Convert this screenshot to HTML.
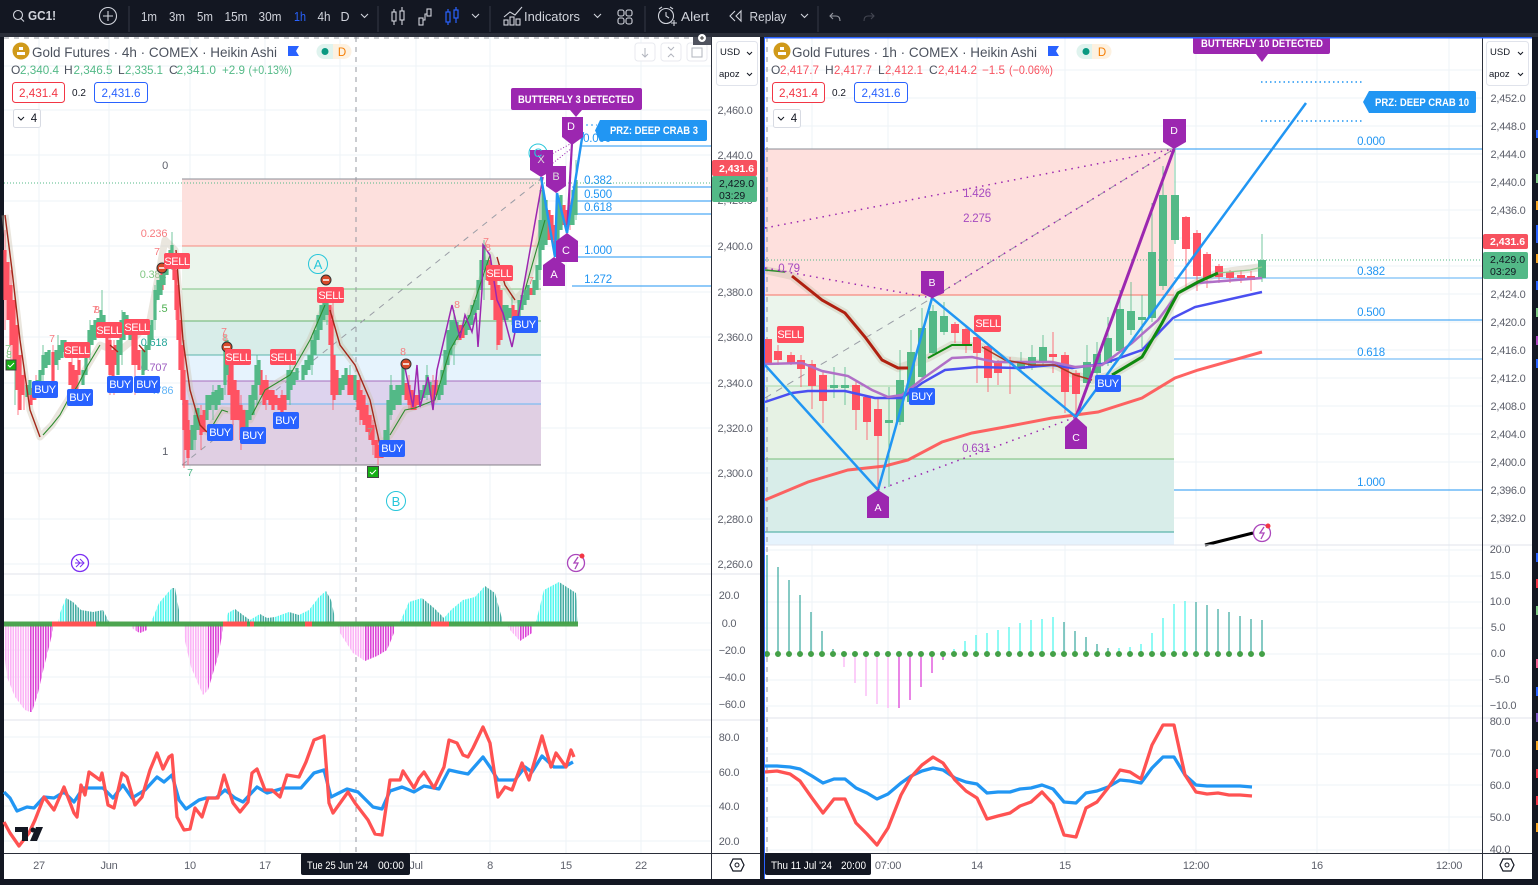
<!DOCTYPE html>
<html><head><meta charset="utf-8"><title>GC1! Chart</title>
<style>
html,body{margin:0;padding:0;background:#131722;width:1538px;height:885px;overflow:hidden}
svg{display:block;font-family:"Liberation Sans",sans-serif}
.tb{fill:#d1d4dc;font-size:12.5px;text-anchor:middle}
.ax{fill:#5d606b;font-size:11px;letter-spacing:-.25px;text-anchor:middle}
.tm{fill:#5d606b;font-size:11px;letter-spacing:-.25px;text-anchor:middle}
.fb{fill:#2196f3;font-size:11.5px;letter-spacing:-.2px;text-anchor:middle}
.lb{fill:#fff;font-size:11px;letter-spacing:-.4px;text-anchor:middle}
.mk{fill:#9c27b0}
.n{fill:#f77c80;font-size:10.5px;text-anchor:middle}
.pl{fill:#a64bc0;font-size:11.5px;letter-spacing:-.2px;text-anchor:middle}
.i{fill:none;stroke:#d1d4dc;stroke-width:1.1}
.g{fill:#4c525e;font-size:12px}
.u{fill:#53b987;font-size:12px}
.d{fill:#f7525f;font-size:12px}
</style></head><body>
<svg width="1538" height="885" viewBox="0 0 1538 885" xmlns="http://www.w3.org/2000/svg">
<defs>
<pattern id="cy" width="2.5" height="4" patternUnits="userSpaceOnUse"><rect width="1.6" height="4" fill="#55f7ee"/></pattern>
<pattern id="te" width="2.5" height="4" patternUnits="userSpaceOnUse"><rect width="1.6" height="4" fill="#45ada4"/></pattern>
<pattern id="pk" width="2.5" height="4" patternUnits="userSpaceOnUse"><rect width="1.6" height="4" fill="#fbb4f6"/></pattern>
<pattern id="mg" width="2.5" height="4" patternUnits="userSpaceOnUse"><rect width="1.6" height="4" fill="#dd45d8"/></pattern>
</defs>
<rect width="1538" height="885" fill="#131722"/>
<rect y="33" width="1538" height="4" fill="#2a2e39"/>

<!-- TOOLBAR -->
<circle cx="18" cy="15" r="4.5" class="i"/><path d="M21 18.5l3 3" class="i"/>
<text x="28" y="20" fill="#d1d4dc" font-size="13" font-weight="bold" textLength="28" lengthAdjust="spacingAndGlyphs">GC1!</text>
<circle cx="108" cy="16" r="8.5" class="i"/><path d="M108 11v10M103 16h10" class="i"/>
<path d="M129 6v26M378 6v26M490 6v26M645 6v26M818 6v26" stroke="#363a45"/>
<text x="149" y="21" class="tb" textLength="16" lengthAdjust="spacingAndGlyphs">1m</text>
<text x="177" y="21" class="tb" textLength="16" lengthAdjust="spacingAndGlyphs">3m</text>
<text x="205" y="21" class="tb" textLength="16" lengthAdjust="spacingAndGlyphs">5m</text>
<text x="236" y="21" class="tb" textLength="23" lengthAdjust="spacingAndGlyphs">15m</text>
<text x="270" y="21" class="tb" textLength="23" lengthAdjust="spacingAndGlyphs">30m</text>
<text x="300" y="21" class="tb" style="fill:#2962ff" textLength="12" lengthAdjust="spacingAndGlyphs">1h</text>
<text x="324" y="21" class="tb" textLength="13" lengthAdjust="spacingAndGlyphs">4h</text>
<text x="345" y="21" class="tb">D</text>
<path d="M361 14l3.500 3.500 3.500-3.500M472 14l3.500 3.500 3.500-3.500M594 14l3.500 3.500 3.500-3.500M801 14l3.500 3.500 3.500-3.500" class="i"/>
<g class="i"><path d="M394 9v16M402 7v18"/><rect x="392" y="12" width="4" height="9" fill="#131722"/><rect x="400" y="11" width="4" height="9" fill="#131722"/>
<rect x="419" y="18" width="4" height="7"/><rect x="427" y="9" width="4" height="7"/><path d="M423 20h2v-6h2"/></g>
<g fill="none" stroke="#2962ff" stroke-width="1.2"><path d="M448 9v16M456 7v16"/><rect x="446" y="12" width="4" height="10" fill="#131722"/><rect x="454" y="10" width="4" height="8" fill="#131722"/></g>
<g class="i"><path d="M504 17l6-5 5 3 7-8"/><rect x="504" y="20" width="4" height="5"/><rect x="510" y="17" width="4" height="8"/><rect x="516" y="19" width="4" height="6"/></g>
<text x="552" y="21" class="tb" textLength="56" lengthAdjust="spacingAndGlyphs">Indicators</text>
<g class="i"><rect x="618" y="10" width="6" height="6" rx="2"/><rect x="626" y="10" width="6" height="6" rx="2"/><rect x="618" y="18" width="6" height="6" rx="2"/><rect x="626" y="18" width="6" height="6" rx="2"/></g>
<g class="i"><circle cx="666" cy="16" r="7.5"/><path d="M666 12v4l3 2M659 9l3-2M673 9l-3-2M671 23h6M674 20v6"/></g>
<text x="695" y="21" class="tb" textLength="28" lengthAdjust="spacingAndGlyphs">Alert</text>
<path d="M735 11l-5 5 5 5M741 11l-5 5 5 5z" class="i"/>
<text x="768" y="21" class="tb" textLength="37" lengthAdjust="spacingAndGlyphs">Replay</text>
<path d="M833 13l-3 3 3 3M830 16h6c3 0 4 2 4 5" stroke="#9598a1" fill="none" stroke-width="1.1"/>
<path d="M871 13l3 3-3 3M874 16h-6c-3 0-4 2-4 5" stroke="#434651" fill="none" stroke-width="1.1"/>

<!-- LEFT PANEL -->
<rect x="4" y="37" width="756" height="842" fill="#fff"/>
<path d="M39 37V853M109 37V853M190 37V853M265 37V853M340 37V853M416 37V853M490 37V853M566 37V853M641 37V853" stroke="#eef3f7"/>
<path d="M4 66H711M4 110H711M4 155H711M4 201H711M4 246H711M4 292H711M4 337H711M4 383H711M4 428H711M4 473H711M4 519H711M4 564H711M4 595H711M4 623H711M4 650H711M4 677H711M4 704H711M4 737H711M4 772H711M4 806H711M4 841H711" stroke="#eef3f7"/>
<rect x="182" y="179" width="359" height="67" fill="#fde0dd"/>
<rect x="182" y="246" width="359" height="43" fill="#ebf5ec"/>
<rect x="182" y="289" width="359" height="32" fill="#e5f1e5"/>
<rect x="182" y="321" width="359" height="34" fill="#d8ede9"/>
<rect x="182" y="355" width="359" height="26" fill="#e6f3fd"/>
<rect x="182" y="381" width="359" height="23" fill="#ddd3ee"/>
<rect x="182" y="404" width="359" height="61" fill="#e0cfe3"/>
<path d="M182 179H541" stroke="#8a8d96"/><path d="M182 246H541" stroke="#f68a80"/><path d="M182 289H541" stroke="#7fc384"/><path d="M182 321H541" stroke="#69b36d"/><path d="M182 355H541" stroke="#5bb4aa"/><path d="M182 381H541" stroke="#a76dbd"/><path d="M182 404H541" stroke="#66b7f3"/><path d="M182 465H541" stroke="#85808a"/>
<path d="M182 465L541 179" stroke="#9a9da6" stroke-dasharray="6 6" fill="none"/>
<text x="165" y="169" class="ax">0</text>
<text x="154" y="237" font-size="11" letter-spacing="-.2" fill="#f77c80" text-anchor="middle">0.236</text>
<text x="153" y="278" font-size="11" letter-spacing="-.2" fill="#81c784" text-anchor="middle">0.382</text>
<text x="163" y="312" font-size="11" fill="#4caf50" text-anchor="middle">.5</text>
<text x="154" y="346" font-size="11" letter-spacing="-.2" fill="#26a69a" text-anchor="middle">0.618</text>
<text x="154" y="371" font-size="11" letter-spacing="-.2" fill="#9c5cc0" text-anchor="middle">0.707</text>
<text x="163" y="394" font-size="11" letter-spacing="-.2" fill="#64b5f6" text-anchor="middle">.786</text>
<text x="165" y="455" class="ax">1</text>
<path d="M582 146H711M572 187H711M572 201H711M572 214H711M572 257H711M572 286H711" stroke="#2196f3"/>
<text x="597" y="142" class="fb">0.000</text><text x="598" y="184" class="fb">0.382</text><text x="598" y="198" class="fb">0.500</text><text x="598" y="211" class="fb">0.618</text><text x="598" y="254" class="fb">1.000</text><text x="598" y="283" class="fb">1.272</text>
<path d="M4 183H711" stroke="#53b987" stroke-width="1" stroke-dasharray="1 2"/>
<path d="M356 37V853M4 38H711" stroke="#9598a1" stroke-dasharray="5 5" fill="none"/>
<!-- MA glow -->
<path d="M5 215L12 270L20 340L30 410L40 437L52 425L68 400L88 365L100 345L118 352L133 340L150 320L165 240L175 250L183 340L190 390L200 425L207 432L222 410L243 412L250 420L265 390L290 375L310 340L325 305L330 310L340 345L355 365L370 400L380 445L390 435L405 410L435 400L450 350L470 315L490 255L505 285L515 300L525 290L545 220" fill="none" stroke="#c9bda9" stroke-opacity=".38" stroke-width="7" stroke-linejoin="round"/>
<!-- wicks -->
<path d="M5 230V330M11 270V370M18 320V415M24 370V410M36 375V400M53 345V392M72 355V405M78 350V400M110 325V395M114 340V395M135 325V395M176 255V320M184 340V468M188 400V465M201 405V450M233 360V440M241 395V450M266 375V410M282 390V425M333 300V410M360 375V425M373 420V455M378 435V465M409 375V410M433 375V410M497 270V350M500 285V345M570 190V230" stroke="#ff5262" stroke-opacity=".75" fill="none"/>
<path d="M15 350V405M43 345V385M58 335V370M90 320V360M102 290V335M122 310V365M155 285V330M172 232V270M195 405V450M213 385V420M225 335V395M257 355V405M290 365V405M312 335V375M327 290V325M350 365V390M391 375V420M427 365V400M454 310V365M484 240V300M512 295V325M540 190V280M576 160V220" stroke="#53b987" stroke-opacity=".8" fill="none"/>
<!-- candles -->
<path stroke="#ff5262" stroke-width="3.2" fill="none" d="M5 250V300M8 262V320M11 285V345M14 300V370M17 325V390M20 355V410M23 375V395M31 388V405M34 388V400M53 352V382M70 362V385M73 365V395M76 370V392M79 360V375M107 338V365M110 340V375M113 350V380M115 345V365M133 335V365M136 335V365M139 350V370M162 268V290M174 260V280M176 270V310M178 285V340M180 320V370M182 345V400M184 370V430M186 400V450M188 420V458M190 430V450M201 415V435M204 410V432M229 355V395M232 365V420M235 380V420M238 390V420M241 405V440M244 410V430M261 370V395M264 380V405M267 380V400M270 390V405M273 390V410M276 395V405M279 398V410M282 395V420M285 395V410M330 305V345M332 320V395M334 355V400M337 370V395M349 375V395M352 375V395M358 380V410M361 390V420M364 395V425M367 405V432M370 415V440M373 425V445M376 440V458M379 445V458M382 448V458M406 383V400M409 385V405M412 390V410M415 395V410M418 395V405M433 385V400M436 380V395M460 325V340M463 325V338M490 260V285M492 265V300M495 275V320M498 285V345M501 290V340M513 305V320M516 310V318M531 288V295M549 210V240M552 215V240M555 225V255M564 205V225M567 210V225"/>
<path stroke="#53b987" stroke-width="3.2" fill="none" d="M27 385V397M30 380V395M37 380V395M40 370V385M43 355V375M46 352V368M49 350V365M56 350V365M59 345V360M62 340V358M65 340V352M83 370V385M86 350V375M89 330V355M92 325V345M95 320V340M98 318V335M101 310V330M104 315V330M118 340V375M121 320V355M124 312V340M127 315V335M130 325V340M143 350V375M146 345V370M149 325V350M152 320V340M155 290V320M158 280V300M161 275V295M164 265V285M167 255V275M170 250V265M172 245V260M192 425V450M195 415V440M198 408V430M207 395V420M210 395V410M213 392V405M216 390V410M219 385V405M222 388V400M225 345V385M227 340V375M247 410V428M250 395V420M253 385V415M256 365V400M259 360V385M288 370V400M291 370V390M294 372V385M297 368V380M303 365V380M306 360V375M309 355V370M312 340V365M315 330V355M318 315V340M321 305V330M324 300V320M327 298V315M340 378V395M343 375V390M346 368V385M355 375V400M385 430V455M388 400V440M391 385V415M394 390V410M397 385V405M400 385V405M403 365V395M421 390V400M424 385V398M427 375V395M430 382V395M439 385V400M442 370V395M445 350V385M448 330V365M451 320V355M454 320V345M457 322V340M466 320V335M469 315V330M472 305V325M475 300V315M478 280V310M481 260V290M484 245V270M487 260V280M504 305V320M507 305V320M510 308V318M519 300V320M522 295V310M525 290V305M528 285V300M534 280V295M537 265V290M540 220V270M543 190V250M546 200V245M558 200V240M561 195V230M570 205V225M573 190V225M576 180V215"/>
<!-- MA lines -->
<path d="M5 215L12 270L20 340L30 410L40 437" fill="none" stroke="#a2281a" stroke-width="1.4"/>
<path d="M43 435L52 425L60 415L68 400L78 385L88 365L100 345" fill="none" stroke="#2e8b2e" stroke-width="1.1"/>
<path d="M110 345L118 352M139 345L145 352M176 250L183 340L190 390L200 425L207 432M330 310L340 345L355 365L370 400L380 445M497 257L505 285L515 300" fill="none" stroke="#a2281a" stroke-width="1.4"/>
<path d="M210 430L222 410L228 412M252 415L265 390L290 375L310 340L325 305M390 435L405 410L415 408L435 400L450 350L470 315L490 255M525 290L545 220" fill="none" stroke="#2e8b2e" stroke-width="1.1"/>
<path d="M404 363L413 407L417 365L420 407L428 377L433 410L437 370L452 305L460 338L465 315L472 332L476 313L478 347L482 290L483 245L490 255L497 300L503 313L512 347L520 307L543 177" fill="none" stroke="#9c27b0" stroke-width="1.5"/>
<path d="M567 233L572 143" fill="none" stroke="#9c27b0" stroke-width="2.2"/>
<path d="M550 155L572 143M548 167L572 148" stroke="#9c27b0" stroke-dasharray="1 2" fill="none"/>
<path d="M541 177L555 257L557 193L567 233L583 132" fill="none" stroke="#2196f3" stroke-width="2.4"/>
<g class="n"><text x="157" y="255">7</text><text x="95" y="313">7</text><text x="97" y="313">8</text><text x="52" y="342">7</text><text x="224" y="335">7</text><text x="225" y="341">8</text><text x="403" y="355">8</text><text x="486" y="245">7</text><text x="488" y="251">8</text><text x="457" y="308">8</text><text x="531" y="284">7</text></g>
<text x="8" y="352" font-size="10.500" fill="#81c784" text-anchor="middle">7</text><text x="9" y="358" font-size="10.5" fill="#81c784" text-anchor="middle">8</text>
<text x="190" y="476" font-size="10.5" fill="#53b987" text-anchor="middle">7</text>
<text x="370" y="435" font-size="10.5" fill="#8fa896" text-anchor="middle">7</text>
<g stroke="#333" fill="#d84a2a"><circle cx="162" cy="268" r="5"/><circle cx="227" cy="347" r="5"/><circle cx="326" cy="280" r="5"/><circle cx="406" cy="364" r="5"/></g>
<path d="M159 268h6M224 347h6M323 280h6M403 364h6" stroke="#fff" stroke-width="1.5"/>
<g fill="#ff4d5e">
<rect x="164" y="253" width="26" height="16" rx="2"/><rect x="64" y="342" width="26" height="16" rx="2"/><rect x="96" y="322" width="26" height="16" rx="2"/><rect x="124" y="319" width="26" height="16" rx="2"/><rect x="225" y="349" width="26" height="16" rx="2"/><rect x="270" y="349" width="26" height="16" rx="2"/><rect x="317" y="287" width="27" height="16" rx="2"/><rect x="486" y="265" width="27" height="16" rx="2"/>
</g>
<g class="lb"><text x="177" y="265">SELL</text><text x="77" y="354">SELL</text><text x="109" y="334">SELL</text><text x="137" y="331">SELL</text><text x="238" y="361">SELL</text><text x="283" y="361">SELL</text><text x="331" y="299">SELL</text><text x="499" y="277">SELL</text></g>
<g fill="#2962ff">
<rect x="32" y="381" width="26" height="17" rx="2"/><rect x="67" y="389" width="26" height="17" rx="2"/><rect x="107" y="376" width="26" height="17" rx="2"/><rect x="134" y="376" width="26" height="17" rx="2"/><rect x="207" y="424" width="26" height="17" rx="2"/><rect x="240" y="427" width="26" height="17" rx="2"/><rect x="273" y="412" width="26" height="17" rx="2"/><rect x="379" y="440" width="26" height="17" rx="2"/><rect x="512" y="316" width="26" height="17" rx="2"/>
</g>
<g class="lb"><text x="45" y="393">BUY</text><text x="80" y="401">BUY</text><text x="120" y="388">BUY</text><text x="147" y="388">BUY</text><text x="220" y="436">BUY</text><text x="253" y="439">BUY</text><text x="286" y="424">BUY</text><text x="392" y="452">BUY</text><text x="525" y="328">BUY</text></g>
<rect x="6" y="360" width="10" height="10" fill="#16b016" stroke="#444"/><path d="M8 365l2 2 4-4" stroke="#fff" fill="none"/>
<rect x="367.500" y="466.500" width="11" height="11" fill="#16b016" stroke="#444"/><path d="M370 472l2 2 4-4" stroke="#fff" fill="none"/>
<g fill="none" stroke="#26c6da"><circle cx="318" cy="264" r="9.500"/><circle cx="396" cy="501" r="9.500"/><circle cx="538" cy="153" r="9"/></g>
<text x="318" y="269" font-size="13" fill="#26c6da" text-anchor="middle">A</text><text x="396" y="506" font-size="13" fill="#26c6da" text-anchor="middle">B</text>
<path class="mk" d="M562 117H583V137L572 145L562 137Z"/>
<path class="mk" d="M530 150H553V170L541 177L530 170Z"/>
<path class="mk" d="M546 166H566V186L556 193L546 186Z"/>
<path class="mk" d="M556 241L567 233L578 241V262H556Z"/>
<path class="mk" d="M543 265L554 257L565 265V286H543Z"/>
<g fill="#fff" font-size="11" text-anchor="middle"><text x="571" y="130">D</text><text x="541" y="163" fill="#ddd">X</text><text x="556" y="180" fill="#ddd">B</text><text x="566" y="254">C</text><text x="554" y="278">A</text></g>
<text x="538" y="157" font-size="12" fill="#26c6da" text-anchor="middle">C</text>
<path class="mk" d="M513 88H640Q642 88 642 90V108Q642 110 640 110H582L576 117L570 110H513Q511 110 511 108V90Q511 88 513 88Z"/>
<text x="576" y="103" font-size="11" font-weight="bold" fill="#fff" text-anchor="middle" textLength="116" lengthAdjust="spacingAndGlyphs">BUTTERFLY 3 DETECTED</text>
<path d="M586 125H597" stroke="#2196f3" stroke-dasharray="2 3"/>
<path d="M600 120H705Q707 120 707 122V139Q707 141 705 141H600L595 130.500Z" fill="#2196f3"/>
<text x="654" y="134" font-size="11" font-weight="bold" fill="#fff" text-anchor="middle" textLength="88" lengthAdjust="spacingAndGlyphs">PRZ: DEEP CRAB 3</text>
<!-- legend left -->
<circle cx="21" cy="51" r="8.500" fill="#d09a1a"/><path d="M17 52h8v3h-8zM19 47h4v3h-4z" fill="#fff"/>
<text x="32" y="57" font-size="14" fill="#4c525e" textLength="245" lengthAdjust="spacingAndGlyphs">Gold Futures · 4h · COMEX · Heikin Ashi</text>
<path d="M288 46h11l-3 5 3 5h-11z" fill="#2962ff"/>
<path d="M333 44h-9a7.500 7.500 0 0 0 0 15h9z" fill="#dff3ee"/><path d="M333 44h11a7.500 7.500 0 0 1 0 15h-11z" fill="#fdf1e0"/>
<circle cx="325" cy="51.500" r="3.500" fill="#089981"/><text x="342" y="56" font-size="11.500" fill="#f57c00" text-anchor="middle">D</text>
<text x="11" y="74" class="g">O</text><text x="20" y="74" class="u" textLength="39" lengthAdjust="spacingAndGlyphs">2,340.4</text>
<text x="64" y="74" class="g">H</text><text x="73.500" y="74" class="u" textLength="39" lengthAdjust="spacingAndGlyphs">2,346.5</text>
<text x="118" y="74" class="g">L</text><text x="125" y="74" class="u" textLength="38" lengthAdjust="spacingAndGlyphs">2,335.1</text>
<text x="169" y="74" class="g">C</text><text x="176.500" y="74" class="u" textLength="39.500" lengthAdjust="spacingAndGlyphs">2,341.0</text>
<text x="222" y="74" class="u" textLength="23" lengthAdjust="spacingAndGlyphs">+2.9</text><text x="248.500" y="74" class="u" textLength="43.500" lengthAdjust="spacingAndGlyphs">(+0.13%)</text>
<rect x="12.500" y="82.500" width="52" height="20" rx="3" fill="#fff" stroke="#f23645"/><text x="38.500" y="97" font-size="12" fill="#f23645" text-anchor="middle" textLength="39" lengthAdjust="spacingAndGlyphs">2,431.4</text>
<text x="79" y="96" font-size="10" fill="#131722" text-anchor="middle">0.2</text>
<rect x="94.500" y="82.500" width="53" height="20" rx="3" fill="#fff" stroke="#2962ff"/><text x="121" y="97" font-size="12" fill="#2962ff" text-anchor="middle" textLength="39" lengthAdjust="spacingAndGlyphs">2,431.6</text>
<rect x="13.500" y="109.500" width="27" height="18" rx="2" fill="#fff" stroke="#d8dbe3"/><path d="M18 117l3 3 3-3" stroke="#131722" fill="none"/><text x="34" y="122" font-size="11.500" fill="#131722" text-anchor="middle">4</text>
<g fill="#fff" stroke="#e8eaef"><rect x="635" y="43" width="20" height="18" rx="3"/><rect x="661" y="43" width="20" height="18" rx="3"/><rect x="687" y="43" width="20" height="18" rx="3"/></g>
<path d="M645 48v9M642 54l3 3 3-3M668 47l3 3 3-3M668 57l3-3 3 3M692 48h10v9h-10z" stroke="#b2b5be" fill="none"/>
<rect x="693" y="37" width="18" height="8" fill="#50535e"/><circle cx="702" cy="38" r="4" fill="#fff"/><path d="M702 36v4M700 38h4" stroke="#333"/>
<circle cx="80" cy="563" r="8.500" fill="#fff" stroke="#7b2ff2" stroke-width="1.300"/><path d="M76 559l4 4-4 4M80 559l4 4-4 4M75 563h9" stroke="#7b2ff2" fill="none"/>
<circle cx="576" cy="563" r="8.500" fill="#fff" stroke="#ab47bc" stroke-width="1.300"/><path d="M578 557l-4 6h4l-3 6" stroke="#ab47bc" fill="none" stroke-width="1.300"/><circle cx="582" cy="556" r="2.500" fill="#f23645"/>
<!-- hist left -->
<polygon fill="url(#pk)" points="4,624 5,660 7,677 15,697 25,710 30,712 30,624"/>
<polygon fill="url(#mg)" points="30,624 30,712 32,712 38,693 44,667 49,647 53,630 53,624"/>
<polygon fill="url(#cy)" points="58,624 60,613 66,598 66,624"/>
<polygon fill="url(#te)" points="66,624 66,598 73,602 81,610 93,612 103,610 108,620 110,624"/>
<polygon fill="url(#pk)" points="132,624 132,628 136,631 136,624"/>
<polygon fill="url(#mg)" points="136,624 136,631 140,633 147,630 147,624"/>
<polygon fill="url(#cy)" points="150,624 152,620 159,603 172,588 172,624"/>
<polygon fill="url(#te)" points="172,624 172,588 175,588 179,610 179,624"/>
<polygon fill="url(#pk)" points="184,624 184,637 191,667 203,695 208,690 208,624"/>
<polygon fill="url(#mg)" points="208,624 208,690 211,680 218,657 223,630 223,624"/>
<polygon fill="url(#cy)" points="226,624 228,613 235,609 235,624"/>
<polygon fill="url(#te)" points="235,624 235,609 243,615 250,620 250,624"/>
<polygon fill="url(#cy)" points="250,624 250,620 260,614 260,624"/>
<polygon fill="url(#te)" points="260,624 260,614 267,618 275,617 275,624"/>
<polygon fill="url(#cy)" points="275,624 275,617 289,612 289,624"/>
<polygon fill="url(#te)" points="289,624 289,612 299,615 299,624"/>
<polygon fill="url(#cy)" points="299,624 299,615 309,610 319,597 326,591 326,624"/>
<polygon fill="url(#te)" points="326,624 326,591 331,600 335,618 335,624"/>
<polygon fill="url(#pk)" points="338,624 340,633 353,653 365,661 365,624"/>
<polygon fill="url(#mg)" points="365,624 365,661 377,656 387,650 394,633 394,624"/>
<polygon fill="url(#cy)" points="399,624 401,620 409,602 422,598 422,624"/>
<polygon fill="url(#te)" points="422,624 422,598 434,608 444,618 444,624"/>
<polygon fill="url(#cy)" points="444,624 444,618 451,610 463,600 475,597 485,586 485,624"/>
<polygon fill="url(#te)" points="485,624 485,586 495,593 501,615 503,624"/>
<polygon fill="url(#pk)" points="507,624 510,630 520,641 520,624"/>
<polygon fill="url(#mg)" points="520,624 520,641 532,633 532,624"/>
<polygon fill="url(#cy)" points="535,624 537,618 544,590 559,582 559,624"/>
<polygon fill="url(#te)" points="559,624 559,582 576,593 578,624"/>
<path d="M4 624H578" stroke="#43a047" stroke-width="5" stroke-opacity=".95"/>
<path d="M52 624H96M223 624H247M250 624H254M305 624H312M431 624H449" stroke="#ff5252" stroke-width="5"/>
<polyline fill="none" stroke="#2196f3" stroke-width="3.3" stroke-linejoin="round" points="4,792 10,798 17,811 27,807 34,808 44,797 54,798 64,792 74,802 83,788 103,788 113,798 123,785 132,798 145,790 157,777 164,782 172,775 179,800 186,809 199,800 206,798 216,798 225,790 235,798 243,802 257,787 267,793 284,788 301,788 314,773 324,770 331,797 347,789 358,792 373,807 382,809 390,791 402,787 414,792 424,786 439,789 449,770 458,772 468,774 483,757 490,767 498,780 515,780 525,767 532,772 542,756 554,767 564,767 573,762"/>
<polyline fill="none" stroke="#ff5252" stroke-width="3.3" stroke-linejoin="round" points="4,822 10,833 19,846 29,833 35,820 44,797 54,810 64,787 74,813 77,817 81,785 85,795 89,772 100,780 102,773 108,805 114,808 122,773 127,777 135,805 142,797 150,770 157,753 163,769 169,757 172,755 177,817 184,830 190,829 195,808 202,817 208,798 218,798 224,775 233,803 240,812 248,802 252,773 257,769 265,790 272,790 280,797 287,775 299,777 306,762 314,740 324,736 329,803 333,813 348,792 355,803 368,820 375,834 382,835 390,780 400,780 403,771 414,788 419,778 424,772 434,788 444,767 449,740 457,743 463,755 468,757 473,748 483,727 490,743 498,797 505,787 512,790 522,763 529,780 542,736 551,767 556,753 566,767 571,750 574,757"/>
<path d="M15 827h13v14h-6v-9h-7zM36 827h7l-6 14h-7z" fill="#131722"/><circle cx="33" cy="830" r="2.500" fill="#131722"/>
<path d="M4 574H760M4 720H760" stroke="#e0e3eb"/>
<rect x="711" y="37" width="1" height="816" fill="#2a2e39"/>
<rect x="4" y="853" width="756" height="1" fill="#2a2e39"/><rect x="711" y="853" width="1" height="26" fill="#2a2e39"/>
<rect x="716.500" y="41.500" width="41" height="44" rx="3" fill="#fff" stroke="#e0e3eb"/>
<text x="720" y="55" font-size="9.500" fill="#131722">USD</text><text x="719" y="77" font-size="9.500" fill="#131722">apoz</text>
<path d="M747 52l2.500 2.500 2.500-2.500M747 73l2.500 2.500 2.500-2.500" stroke="#131722" fill="none"/>
<g class="ax"><text x="735" y="114">2,460.0</text><text x="735" y="159">2,440.0</text><text x="735" y="204">2,420.0</text><text x="735" y="250">2,400.0</text><text x="735" y="296">2,380.0</text><text x="735" y="341">2,360.0</text><text x="735" y="387">2,340.0</text><text x="735" y="432">2,320.0</text><text x="735" y="477">2,300.0</text><text x="735" y="523">2,280.0</text><text x="735" y="568">2,260.0</text><text x="729" y="599">20.0</text><text x="729" y="627">0.0</text><text x="732" y="654">−20.0</text><text x="732" y="681">−40.0</text><text x="732" y="708">−60.0</text><text x="729" y="741">80.0</text><text x="729" y="776">60.0</text><text x="729" y="810">40.0</text><text x="729" y="845">20.0</text></g>
<rect x="712" y="160" width="45" height="16" rx="2" fill="#f7525f"/><text x="719" y="172" font-size="10.500" font-weight="bold" fill="#fff">2,431.6</text>
<rect x="712" y="176" width="45" height="26" rx="2" fill="#53b987"/><text x="719" y="187" font-size="10.500" fill="#131722">2,429.0</text><text x="719" y="199" font-size="10.500" fill="#131722">03:29</text>
<g class="tm"><text x="39" y="869">27</text><text x="109" y="869">Jun</text><text x="190" y="869">10</text><text x="265" y="869">17</text><text x="416" y="869">Jul</text><text x="490" y="869">8</text><text x="566" y="869">15</text><text x="641" y="869">22</text></g>
<rect x="301" y="853" width="109" height="22" rx="2" fill="#131722"/><text x="307" y="869" font-size="11" fill="#fff" textLength="61" lengthAdjust="spacingAndGlyphs">Tue 25 Jun '24</text><text x="378" y="869" font-size="11" fill="#fff" textLength="26" lengthAdjust="spacingAndGlyphs">00:00</text>
<path d="M733 859h8l3 6-3 6h-8l-3-6z" fill="none" stroke="#131722" stroke-width="1.200"/><circle cx="737" cy="865" r="2" fill="none" stroke="#131722"/>

<!-- RIGHT PANEL -->
<rect x="765" y="37" width="767" height="842" fill="#fff"/>
<path d="M812 37V853M888 37V853M977 37V853M1065 37V853M1196 37V853M1317 37V853M1449 37V853" stroke="#eef3f7"/>
<path d="M765 70H1482M765 98H1482M765 126H1482M765 154H1482M765 182H1482M765 210H1482M765 238H1482M765 266H1482M765 294H1482M765 322H1482M765 350H1482M765 378H1482M765 406H1482M765 434H1482M765 462H1482M765 490H1482M765 518H1482M765 550H1482M765 576H1482M765 602H1482M765 628H1482M765 654H1482M765 680H1482M765 706H1482M765 754H1482M765 785H1482M765 817H1482M765 850H1482" stroke="#eef3f7"/>
<rect x="765" y="149" width="409" height="146" fill="#fee0dd"/>
<rect x="765" y="295" width="409" height="91" fill="#ebf5ec"/>
<rect x="765" y="386" width="409" height="73" fill="#e6f2e4"/>
<rect x="765" y="459" width="409" height="73" fill="#d8ede9"/>
<rect x="765" y="532" width="409" height="13" fill="#e6f3fd"/>
<path d="M765 149H1174" stroke="#8a8d96"/><path d="M765 295H1174" stroke="#f68a80" stroke-width="1.300"/><path d="M765 386H1174" stroke="#a5d6a7"/><path d="M765 459H1174" stroke="#8dc98f" stroke-width="1.300"/><path d="M765 532H1174" stroke="#5bb4aa" stroke-width="1.300"/>
<path d="M1174 149H1482M1174 278H1482M1174 320H1482M1174 359H1482M1174 490H1482" stroke="#2196f3"/>
<path d="M1174 278H1482M1174 359H1482" stroke="#90caf9" stroke-width="1.500"/>
<text x="1371" y="145" class="fb">0.000</text><text x="1371" y="275" class="fb">0.382</text><text x="1371" y="316" class="fb">0.500</text><text x="1371" y="356" class="fb">0.618</text><text x="1371" y="486" class="fb">1.000</text>
<path d="M765 260H1482" stroke="#53b987" stroke-dasharray="1 2"/>
<path d="M767 37V853" stroke="#9598a1" stroke-dasharray="5 5"/>
<path d="M765 398L932 298L1174 149" stroke="#9a9da6" stroke-dasharray="7 6" fill="none"/>
<path d="M765 270L792 276L822 300L845 313L865 337L882 360L898 368L928 358L952 345L982 347L1005 360L1055 365L1075 375L1092 380L1112 375L1142 357L1162 323L1178 293L1198 282L1218 273L1262 267" fill="none" stroke="#c9bda9" stroke-opacity=".38" stroke-width="8"/>
<path stroke="#ff5262" stroke-opacity=".8" fill="none" d="M778 345V365M791 352V365M801 355V387M812 360V409M823 372V423M856 380V430M867 395V440M878 398V490M955 322V343M966 325V353M977 335V383M988 344V392M998 360V385M1010 357V394M1053 332V373M1065 352V413M1076 370V417M1186 216V287M1197 230V291M1207 252V288M1219 264V283M1230 270V283M1241 270V283M1251 271V291"/>
<path stroke="#53b987" stroke-opacity=".8" fill="none" d="M834 367V398M845 367V405M889 387V487M900 350V425M911 330V405M922 308V380M933 305V356M944 302V335M1021 352V372M1032 345V370M1043 335V365M1087 345V386M1097 342V376M1108 317V366M1120 290V353M1131 282V335M1142 295V348M1152 203V322M1163 166V290M1175 148V244M1262 234V282"/>
<path stroke="#ff5262" stroke-width="8" fill="none" d="M768 339V363M778 351V360M791 355V363M801 360V369M812 364V386M823 375V401M856 385V410M867 397V422M878 409V436M955 324V333M966 329V346M977 337V353M988 346V378M998 362V373M1010 367V369M1053 354V357M1065 355V392M1076 373V394M1186 217V249M1197 233V276M1207 254V278M1219 266V277M1230 272V278M1241 275V278M1251 276V280"/>
<path stroke="#53b987" stroke-width="8" fill="none" d="M834 385V388M845 385V388M889 420V423M900 380V422M911 352V402M922 328V377M933 311V353M944 316V332M1021 362V369M1032 357V366M1043 347V362M1087 362V383M1097 354V373M1108 338V363M1120 309V351M1131 311V330M1142 317V320M1152 252V318M1163 195V286M1175 195V240M1262 260V278"/>
<polyline fill="none" stroke="#ff5252" stroke-width="3" stroke-opacity=".9" points="765,500 808,482 848,470 885,466 908,460 942,442 972,433 1005,427 1052,418 1098,412 1142,398 1175,378 1198,370 1262,352"/>
<polyline fill="none" stroke="#4a4ff0" stroke-width="2.500" points="765,402 792,393 808,391 845,391 875,398 902,398 922,383 945,370 978,367 1018,368 1052,365 1072,368 1102,364 1142,350 1173,318 1195,307 1262,292"/>
<polyline fill="none" stroke="#b06fc7" stroke-width="2.500" points="765,364 802,363 822,371 848,376 872,390 888,397 902,395 925,377 952,358 972,357 995,362 1018,362 1052,362 1075,367 1102,365 1132,343 1158,320 1178,293 1198,283 1262,278"/>
<path d="M765 270L785 272" stroke="#2e8b2e" fill="none" stroke-width="1.500"/>
<polyline fill="none" stroke="#b02010" stroke-width="3" points="792,276 822,300 845,313 865,337 882,360 898,368 908,368"/>
<polyline fill="none" stroke="#0f8a0f" stroke-width="2" points="928,358 952,345 972,345"/>
<polyline fill="none" stroke="#a83a20" stroke-width="1.500" points="982,347 1005,360 1032,365 1055,365 1075,375 1092,380"/>
<polyline fill="none" stroke="#0f8a0f" stroke-width="3" points="1112,375 1142,357 1162,323 1178,293 1198,282 1218,273"/>
<polyline fill="none" stroke="#8fca8f" stroke-width="1.200" points="1218,273 1250,270 1262,267"/>
<path d="M1076 417L1174 149" stroke="#9c27b0" stroke-width="3" fill="none"/>
<path d="M765 365L878 490L932 298L1076 417L1306 103" stroke="#2196f3" stroke-width="2.500" fill="none"/>
<path d="M765 228L1174 149M932 298L1174 149M765 268L932 298M878 490L1076 417" stroke="#9c27b0" stroke-width="1.500" stroke-dasharray="1.500 5" fill="none"/>
<path d="M1261 82H1362M1261 121H1362" stroke="#2196f3" stroke-width="1.500" stroke-dasharray="1.500 3"/>
<text x="977" y="197" class="pl">1.426</text><text x="977" y="222" class="pl">2.275</text><text x="789" y="272" class="pl">0.79</text><text x="976" y="452" class="pl">0.631</text>
<rect x="777" y="326" width="27" height="17" rx="2" fill="#ff4d5e"/><text x="790" y="338" class="lb">SELL</text>
<rect x="974" y="315" width="27" height="17" rx="2" fill="#ff4d5e"/><text x="988" y="327" class="lb">SELL</text>
<rect x="909" y="388" width="26" height="17" rx="2" fill="#2962ff"/><text x="922" y="400" class="lb">BUY</text>
<rect x="1095" y="375" width="26" height="17" rx="2" fill="#2962ff"/><text x="1108" y="387" class="lb">BUY</text>
<path class="mk" d="M1163 119H1186V142L1174 149L1163 142Z"/><text x="1174" y="134" font-size="10.500" fill="#fff" text-anchor="middle">D</text>
<path class="mk" d="M921 271H944V293L932 298L921 293Z"/><text x="932" y="286" font-size="10.500" fill="#fff" text-anchor="middle">B</text>
<path class="mk" d="M867 497L878 490L889 497V518H867Z"/><text x="878" y="511" font-size="10.500" fill="#fff" text-anchor="middle">A</text>
<path class="mk" d="M1065 427L1076 417L1087 427V449H1065Z"/><text x="1076" y="441" font-size="10.500" fill="#fff" text-anchor="middle">C</text>
<path class="mk" d="M1193 37H1330V52Q1330 54 1328 54H1268L1262 62L1256 54H1195Q1193 54 1193 52Z"/>
<text x="1262" y="47" font-size="11" font-weight="bold" fill="#fff" text-anchor="middle" textLength="122" lengthAdjust="spacingAndGlyphs">BUTTERFLY 10 DETECTED</text>
<path d="M1369 91H1474Q1476 91 1476 93V111Q1476 113 1474 113H1369L1363 102Z" fill="#2196f3"/>
<text x="1422" y="106" font-size="11" font-weight="bold" fill="#fff" text-anchor="middle" textLength="94" lengthAdjust="spacingAndGlyphs">PRZ: DEEP CRAB 10</text>
<path d="M1205 545L1253 533" stroke="#000" stroke-width="3"/>
<circle cx="1262" cy="533" r="8.500" fill="#fff" stroke="#ab47bc" stroke-width="1.300"/><path d="M1264 527l-4 6h4l-3 6" stroke="#ab47bc" fill="none" stroke-width="1.300"/><circle cx="1268" cy="526" r="2.500" fill="#f23645"/>
<circle cx="782" cy="51" r="8.500" fill="#d09a1a"/><path d="M778 52h8v3h-8zM780 47h4v3h-4z" fill="#fff"/>
<text x="792" y="57" font-size="14" fill="#4c525e" textLength="245" lengthAdjust="spacingAndGlyphs">Gold Futures · 1h · COMEX · Heikin Ashi</text>
<path d="M1048 46h11l-3 5 3 5h-11z" fill="#2962ff"/>
<path d="M1092 44h-8a7.500 7.500 0 0 0 0 15h8z" fill="#dff3ee"/><path d="M1092 44h12a7.500 7.500 0 0 1 0 15h-12z" fill="#fdf1e0"/>
<circle cx="1086" cy="51.500" r="3.500" fill="#089981"/><text x="1102" y="56" font-size="11.500" fill="#f57c00" text-anchor="middle">D</text>
<text x="771" y="74" class="g">O</text><text x="780" y="74" class="d" textLength="39" lengthAdjust="spacingAndGlyphs">2,417.7</text>
<text x="825" y="74" class="g">H</text><text x="834" y="74" class="d" textLength="38" lengthAdjust="spacingAndGlyphs">2,417.7</text>
<text x="878" y="74" class="g">L</text><text x="885" y="74" class="d" textLength="38" lengthAdjust="spacingAndGlyphs">2,412.1</text>
<text x="929" y="74" class="g">C</text><text x="938" y="74" class="d" textLength="39" lengthAdjust="spacingAndGlyphs">2,414.2</text>
<text x="982" y="74" class="d" textLength="23" lengthAdjust="spacingAndGlyphs">−1.5</text><text x="1009" y="74" class="d" textLength="44" lengthAdjust="spacingAndGlyphs">(−0.06%)</text>
<rect x="772.500" y="82.500" width="52" height="20" rx="3" fill="#fff" stroke="#f23645"/><text x="798.500" y="97" font-size="12" fill="#f23645" text-anchor="middle" textLength="39" lengthAdjust="spacingAndGlyphs">2,431.4</text>
<text x="839" y="96" font-size="10" fill="#131722" text-anchor="middle">0.2</text>
<rect x="854.500" y="82.500" width="53" height="20" rx="3" fill="#fff" stroke="#2962ff"/><text x="881" y="97" font-size="12" fill="#2962ff" text-anchor="middle" textLength="39" lengthAdjust="spacingAndGlyphs">2,431.6</text>
<rect x="773.500" y="109.500" width="27" height="18" rx="2" fill="#fff" stroke="#d8dbe3"/><path d="M778 117l3 3 3-3" stroke="#131722" fill="none"/><text x="794" y="122" font-size="11.500" fill="#131722" text-anchor="middle">4</text>
<path fill="none" stroke="#45ada4" stroke-width="1.300" d="M767 654V555M778 654V567M789 654V580M800 654V595M811 654V612M822 654V631M833 654V649M1064 654V622M1075 654V631M1086 654V637M1097 654V644M1108 654V648M1196 654V602M1207 654V605M1218 654V609M1229 654V612M1240 654V616M1251 654V619M1262 654V620"/>
<path fill="none" stroke="#55f7ee" stroke-width="1.300" d="M954 654V649M965 654V641M976 654V635M987 654V633M998 654V630M1009 654V627M1020 654V623M1031 654V620M1042 654V619M1053 654V617M1119 654V648M1130 654V647M1141 654V644M1152 654V633M1163 654V618M1174 654V604M1185 654V601"/>
<path fill="none" stroke="#fbb4f6" stroke-width="1.300" d="M844 654V667M855 654V683M866 654V696M877 654V704M888 654V708"/>
<path fill="none" stroke="#dd45d8" stroke-width="1.300" d="M899 654V708M910 654V700M921 654V687M932 654V673M943 654V660"/>
<line x1="767" y1="654" x2="1263" y2="654" stroke="#43a047" stroke-width="6" stroke-linecap="round" stroke-dasharray="0 11"/>
<polyline fill="none" stroke="#2196f3" stroke-width="3.300" stroke-linejoin="round" points="765,766 777,766 790,767 800,769 812,776 823,783 834,779 845,779 856,788 867,793 877,799 888,794 901,783 911,776 922,771 933,768 943,770 955,778 966,782 977,784 987,793 998,792 1010,792 1020,789 1031,788 1042,785 1053,789 1064,802 1076,803 1086,793 1097,791 1108,787 1120,780 1130,781 1141,783 1152,768 1163,757 1174,757 1185,775 1196,785 1207,786 1218,786 1229,786 1240,786 1252,787"/>
<polyline fill="none" stroke="#ff5252" stroke-width="3.300" stroke-linejoin="round" points="765,772 777,771 790,774 800,781 812,798 823,813 834,799 845,799 856,823 867,834 877,845 888,828 901,795 911,777 922,765 933,757 943,763 955,780 966,791 977,798 987,819 998,816 1010,813 1020,806 1031,802 1042,792 1053,804 1064,835 1076,837 1086,808 1097,802 1108,788 1120,770 1130,772 1141,779 1152,745 1163,725 1174,725 1185,775 1196,792 1207,794 1218,793 1229,795 1240,795 1252,796"/>
<path d="M765 545H1532M765 718H1532" stroke="#e0e3eb"/>
<rect x="1482" y="37" width="1" height="816" fill="#2a2e39"/>
<rect x="765" y="853" width="767" height="1" fill="#2a2e39"/><rect x="1482" y="853" width="1" height="26" fill="#2a2e39"/>
<rect x="765" y="37" width="767" height="1.500" fill="#2962ff"/><rect x="764" y="37" width="1" height="842" fill="#2962ff"/>
<rect x="1486.500" y="41.500" width="42" height="44" rx="3" fill="#fff" stroke="#e0e3eb"/>
<text x="1490" y="55" font-size="9.500" fill="#131722">USD</text><text x="1489" y="77" font-size="9.500" fill="#131722">apoz</text>
<path d="M1518 52l2.500 2.500 2.500-2.500M1518 73l2.500 2.500 2.500-2.500" stroke="#131722" fill="none"/>
<g class="ax"><text x="1508" y="102">2,452.0</text><text x="1508" y="130">2,448.0</text><text x="1508" y="158">2,444.0</text><text x="1508" y="186">2,440.0</text><text x="1508" y="214">2,436.0</text><text x="1508" y="298">2,424.0</text><text x="1508" y="326">2,420.0</text><text x="1508" y="354">2,416.0</text><text x="1508" y="382">2,412.0</text><text x="1508" y="410">2,408.0</text><text x="1508" y="438">2,404.0</text><text x="1508" y="466">2,400.0</text><text x="1508" y="494">2,396.0</text><text x="1508" y="522">2,392.0</text><text x="1500" y="553">20.0</text><text x="1500" y="579">15.0</text><text x="1500" y="605">10.0</text><text x="1498" y="631">5.0</text><text x="1498" y="657">0.0</text><text x="1499" y="683">−5.0</text><text x="1503" y="709">−10.0</text><text x="1500" y="725">80.0</text><text x="1500" y="757">70.0</text><text x="1500" y="789">60.0</text><text x="1500" y="821">50.0</text><text x="1500" y="853">40.0</text></g>
<rect x="1483" y="234" width="45" height="15" rx="2" fill="#f7525f"/><text x="1490" y="245" font-size="10.500" font-weight="bold" fill="#fff">2,431.6</text>
<rect x="1483" y="252" width="45" height="27" rx="2" fill="#53b987"/><text x="1490" y="263" font-size="10.500" fill="#131722">2,429.0</text><text x="1490" y="275" font-size="10.500" fill="#131722">03:29</text>
<g class="tm"><text x="888" y="869">07:00</text><text x="977" y="869">14</text><text x="1065" y="869">15</text><text x="1196" y="869">12:00</text><text x="1317" y="869">16</text><text x="1449" y="869">12:00</text></g>
<rect x="765" y="853" width="106" height="22" rx="2" fill="#131722"/><text x="771" y="869" font-size="11" fill="#fff" textLength="61" lengthAdjust="spacingAndGlyphs">Thu 11 Jul '24</text><text x="841" y="869" font-size="11" fill="#fff" textLength="25" lengthAdjust="spacingAndGlyphs">20:00</text>
<path d="M1503 859h8l3 6-3 6h-8l-3-6z" fill="none" stroke="#131722" stroke-width="1.200"/><circle cx="1507" cy="865" r="2" fill="none" stroke="#131722"/>
<g>
<rect x="1536" y="130" width="2" height="8" fill="#2962ff"/><rect x="1536" y="174" width="2" height="9" fill="#81c784"/><rect x="1536" y="201" width="2" height="9" fill="#f9a825"/><rect x="1536" y="225" width="2" height="18" fill="#2962ff"/><rect x="1536" y="254" width="2" height="9" fill="#f9a825"/><rect x="1536" y="281" width="2" height="9" fill="#2962ff"/><rect x="1536" y="308" width="2" height="9" fill="#81c784"/><rect x="1536" y="336" width="2" height="9" fill="#ab47bc"/><rect x="1536" y="359" width="2" height="9" fill="#2962ff"/><rect x="1536" y="553" width="2" height="9" fill="#2962ff"/><rect x="1536" y="579" width="2" height="9" fill="#f23645"/><rect x="1536" y="606" width="2" height="9" fill="#81c784"/><rect x="1536" y="659" width="2" height="9" fill="#f06292"/><rect x="1536" y="687" width="2" height="9" fill="#2962ff"/><rect x="1536" y="713" width="2" height="9" fill="#7e57c2"/><rect x="1536" y="741" width="2" height="9" fill="#f9a825"/><rect x="1536" y="769" width="2" height="9" fill="#f23645"/><rect x="1536" y="796" width="2" height="9" fill="#f23645"/><rect x="1536" y="823" width="2" height="9" fill="#f9a825"/>
</g>
</svg>
</body></html>
